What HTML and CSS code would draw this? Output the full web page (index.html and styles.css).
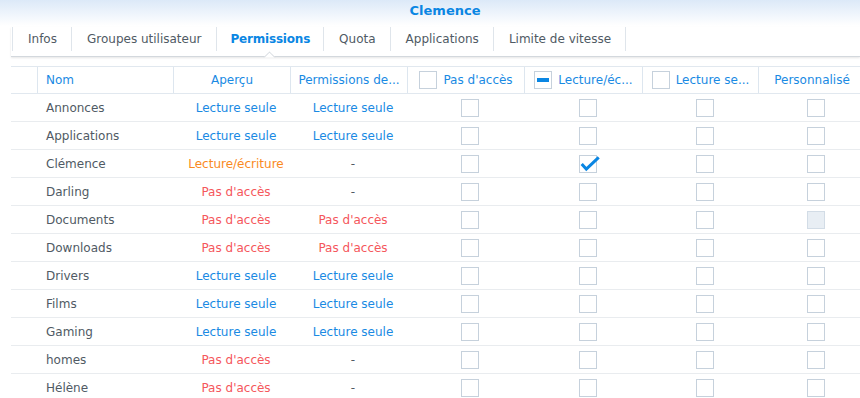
FILE: index.html
```html
<!DOCTYPE html>
<html lang="fr">
<head>
  <meta charset="UTF-8" />
  <title>Clemence</title>
  <link rel="stylesheet" href="styles.css">
</head>
<body>
  <div class="titlebar">Clemence</div>

  <div class="tabs">
    <div class="tab">Infos</div>
    <div class="tab">Groupes utilisateur</div>
    <div class="tab active">Permissions</div>
    <div class="tab">Quota</div>
    <div class="tab">Applications</div>
    <div class="tab">Limite de vitesse</div>
  </div>

  <div class="grid">
    <div class="row head">
      <div class="cell"></div>
      <div class="cell name">Nom</div>
      <div class="cell">Aperçu</div>
      <div class="cell">Permissions de...</div>
      <div class="cell"><span class="box"></span>Pas d'accès</div>
      <div class="cell"><span class="box partial"></span>Lecture/éc...</div>
      <div class="cell"><span class="box"></span>Lecture se...</div>
      <div class="cell">Personnalisé</div>
    </div>
  </div>

  <script>
    const shares = [
      { name: "Annonces", preview: "ro", group: "ro" },
      { name: "Applications", preview: "ro", group: "ro" },
      { name: "Clémence", preview: "rw", group: "", checked: 1 },
      { name: "Darling", preview: "na", group: "" },
      { name: "Documents", preview: "na", group: "na", custom: "disabled" },
      { name: "Downloads", preview: "na", group: "na" },
      { name: "Drivers", preview: "ro", group: "ro" },
      { name: "Films", preview: "ro", group: "ro" },
      { name: "Gaming", preview: "ro", group: "ro" },
      { name: "homes", preview: "na", group: "" },
      { name: "Hélène", preview: "na", group: "" }
    ];

    const labels = { ro: "Lecture seule", rw: "Lecture/écriture", na: "Pas d'accès" };
    const check = '<svg class="tick" width="22" height="18" viewBox="0 0 22 18"><polyline points="2.7,9 7.3,14 19.7,2.3" /></svg>';

    function permCell(code) {
      if (!code) return '<div class="cell dash">-</div>';
      return `<div class="cell ${code}">${labels[code]}</div>`;
    }

    const grid = document.querySelector('.grid');
    shares.forEach(s => {
      let boxes = '';
      for (let i = 0; i < 4; i++) {
        let cls = 'box';
        if (i === 3 && s.custom) cls += ' disabled';
        const inner = s.checked === i ? check : '';
        boxes += `<div class="cell"><span class="${cls}">${inner}</span></div>`;
      }
      grid.insertAdjacentHTML('beforeend', `
        <div class="row">
          <div class="cell"></div>
          <div class="cell name">${s.name}</div>
          ${permCell(s.preview)}
          ${permCell(s.group)}
          ${boxes}
        </div>`);
    });
  </script>
</body>
</html>
```

FILE: styles.css
```css
body {
  margin: 0;
  width: 860px;
  height: 398px;
  overflow: hidden;
  font-family: "DejaVu Sans", Verdana, sans-serif;
  font-size: 12px;
  color: #505a64;
  background: #fff;
}
.titlebar {
  height: 22px;
  line-height: 22px;
  text-align: center;
  font-weight: bold;
  font-size: 13px;
  color: #0a86e3;
  background: linear-gradient(#dce9f8, #ffffff 26px);
  padding: 0 0 5px 30px;
}
.tabs {
  display: flex;
  margin-left: 11px;
  padding-left: 1px;
  height: 29px;
  border-bottom: 1px solid #d3d8dd;
  box-shadow: 0 1px 2px rgba(0, 0, 0, 0.1);
}
.tab {
  position: relative;
  height: 24px;
  line-height: 24px;
  padding: 0 14px 0 15px;
  border-right: 1px solid #dfe5eb;
}
.tab:first-child {
  border-left: 1px solid #dfe5eb;
}
.tab.active {
  color: #0a86e3;
  font-weight: bold;
  padding: 0 13px 0 14px;
  letter-spacing: -0.2px;
}
.tab.active::after {
  content: '';
  position: absolute;
  left: 50%;
  top: 26px;
  width: 8px;
  height: 8px;
  margin-left: -5px;
  background: #fff;
  border-left: 1px solid #ccd2d8;
  border-top: 1px solid #ccd2d8;
  transform: rotate(45deg);
  clip-path: polygon(0 0, 100% 0, 0 100%);
}
.grid {
  margin: 9px 0 0 11px;
  width: 854px;
}
.row {
  display: grid;
  grid-template-columns: 26px 136px 117px 117px 117px 118px 116px 107px;
  height: 28px;
  border-bottom: 1px solid #e9ecef;
  box-sizing: border-box;
}
.row.head {
  height: 28px;
  border-top: 1px solid #e1e8ef;
  border-bottom: 1px solid #e1e8ef;
  color: #1a8ae3;
}
.cell {
  display: flex;
  align-items: center;
  justify-content: center;
  padding-left: 9px;
  white-space: nowrap;
  overflow: visible;
}
.head .cell {
  padding-left: 0;
  border-left: 1px solid #dde6ef;
}
.head .cell:first-child {
  border-left: none;
}
.cell.name {
  justify-content: flex-start;
}
.head .cell.name {
  padding-left: 8px;
}
.ro {
  color: #1a8ae3;
}
.rw {
  color: #fa8a1e;
}
.na {
  color: #f5575c;
}
.dash {
  color: #505a64;
}
.box {
  position: relative;
  display: inline-block;
  width: 16px;
  height: 16px;
  border: 1px solid #c6d1dc;
  background: #fff;
  flex: none;
}
.head .box {
  margin-right: 6px;
}
.box.partial::after {
  content: '';
  position: absolute;
  left: 2px;
  top: 6px;
  width: 12px;
  height: 4px;
  background: #0a86e3;
}
.box.disabled {
  background: #e8eef4;
  border-color: #d2dce6;
}
.tick {
  position: absolute;
  left: -1px;
  top: -1px;
  overflow: visible;
}
.tick polyline {
  fill: none;
  stroke: #0a86e3;
  stroke-width: 3;
}
```
